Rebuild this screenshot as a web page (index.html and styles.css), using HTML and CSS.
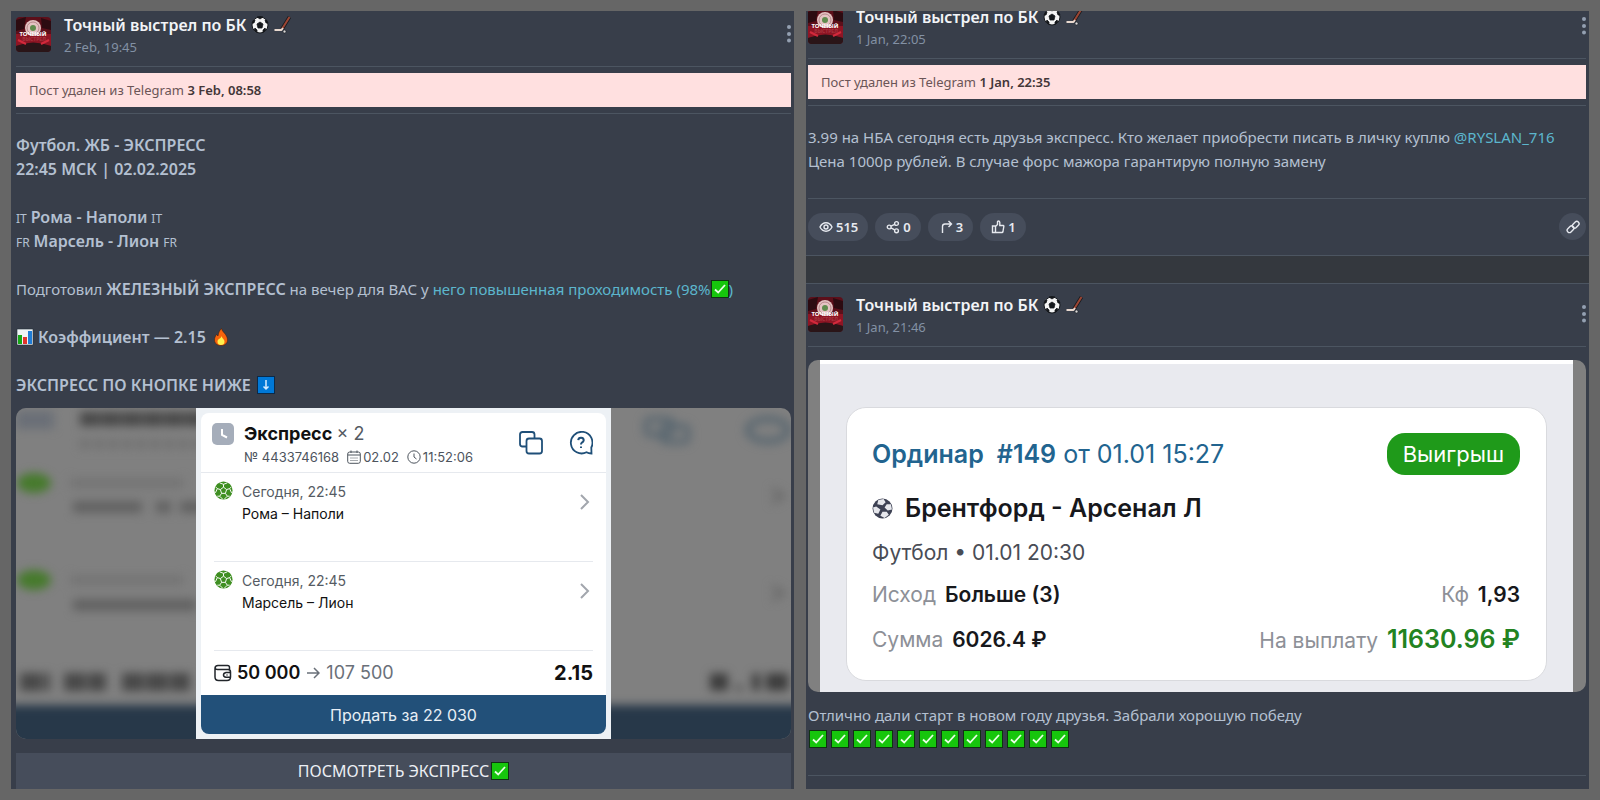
FILE: index.html
```html
<!DOCTYPE html>
<html lang="ru">
<head>
    <meta charset="UTF-8">
    <meta name="viewport" content="width=device-width, initial-scale=1.0">
    <title>Точный выстрел по БК</title>
    <link rel="stylesheet" href="styles.css">
</head>
<body>
    <!-- icons -->
    <svg class="sprite" aria-hidden="true">
        <symbol id="avatar" viewBox="0 0 35 35">
            <rect width="35" height="35" fill="#5c0f1a"/>
            <path d="M0 3L10 0 8 12 0 14zM25 1L35 4V13L26 11z" fill="#2c0b11"/>
            <path d="M0 17H35V29Q17 24 0 29z" fill="#8e1524"/>
            <path d="M0 29Q17 22 35 29V35H0z" fill="#2a1518"/>
            <path d="M2 23L10 27M33 23L25 27" stroke="#d22a3c" stroke-width="2"/>
            <circle cx="17" cy="11" r="8" fill="#e4c3c3"/>
            <circle cx="17" cy="11" r="6" fill="none" stroke="#b8878b" stroke-width="1"/>
            <circle cx="17" cy="11" r="3" fill="#5f8b4d"/>
            <text x="17" y="19" text-anchor="middle" font-family="Noto Sans, sans-serif" font-size="6" font-weight="700" fill="#ffffff">ТОЧНЫЙ</text>
            <text x="18" y="24" text-anchor="middle" font-family="Noto Sans, sans-serif" font-size="5" font-weight="700" fill="#a8343f">ВЫСТРЕЛ</text>
        </symbol>
        <symbol id="ball" viewBox="0 0 18 18">
            <circle cx="9" cy="9" r="8" fill="#f4f4f4" stroke="#15181c" stroke-width="1"/>
            <path d="M9 6L12 8 11 12H7L6 8zM6 1L9 3 12 1 9 .5zM1 7L3 7 4 4 2.500 4zM17 7L15 7 14 4 15.500 4zM3 14L4 12 6 14 6 16.500zM15 14L14 12 12 14 12 16.500z" fill="#15181c" stroke="#15181c" stroke-width=".8"/>
        </symbol>
        <symbol id="stick" viewBox="0 0 18 18">
            <path d="M16.500 1L9 13" stroke="#15181c" stroke-width="3.500" fill="none"/>
            <path d="M16.500 1L9 13" stroke="#9c4634" stroke-width="2" fill="none"/>
            <path d="M10 12L8.500 14H1.500" stroke="#e9d9cf" stroke-width="2" fill="none" stroke-linejoin="round"/>
            <circle cx="11.500" cy="15.500" r="1.500" fill="#d9d9d9" stroke="#15181c" stroke-width=".6"/>
        </symbol>
        <symbol id="check" viewBox="0 0 18 18">
            <rect x=".5" y=".5" width="17" height="17" fill="#16c60c" stroke="#0f3312"/>
            <path d="M4 9.500L7.200 12.500 14 5" fill="none" stroke="#e9ffe6" stroke-width="1.800"/>
        </symbol>
        <symbol id="down" viewBox="0 0 18 18">
            <rect x=".5" y=".5" width="17" height="17" fill="#0078d7" stroke="#0b2a49"/>
            <path d="M9 4V13M6.500 10.500L9 13 11.500 10.500" fill="none" stroke="#d7ecff" stroke-width="1.500"/>
        </symbol>
        <symbol id="chart" viewBox="0 0 18 18">
            <rect x="1" y="1" width="16" height="16" fill="#eef3f6" stroke="#22303a" stroke-width=".6"/>
            <rect x="2" y="7" width="4" height="9" fill="#16a716"/>
            <rect x="7" y="9" width="4" height="7" fill="#e0342c"/>
            <rect x="12" y="3" width="4" height="13" fill="#1f7cd6"/>
        </symbol>
        <symbol id="fire" viewBox="0 0 18 18">
            <path d="M9.500 .5C10 4 15.500 6.500 15.500 12 15.500 15.500 12.500 17.500 9 17.500S2.500 15.500 2.500 12C2.500 9.500 3.500 8 4.500 6.500L6 8C6.500 5 7.500 2 9.500 .5z" fill="#f7630c" stroke="#3a1a0a" stroke-width=".5"/>
            <path d="M9.500 8C10 10.500 12.500 11 12.500 13.800 12.500 16 11 17 9 17S5.500 16 5.500 13.800C5.500 12.500 6 11.500 7 11 8 10.500 9.300 9.500 9.500 8z" fill="#fff04d"/>
        </symbol>
        <symbol id="dots" viewBox="0 0 4 18">
            <circle cx="2" cy="2" r="2"/><circle cx="2" cy="9" r="2"/><circle cx="2" cy="15.500" r="2"/>
        </symbol>
        <symbol id="eye" viewBox="0 0 14 14">
            <path d="M1 7C2.500 4 4.500 2.800 7 2.800S11.500 4 13 7C11.500 10 9.500 11.200 7 11.200S2.500 10 1 7z"/><circle cx="7" cy="7" r="2"/>
        </symbol>
        <symbol id="share" viewBox="0 0 14 14">
            <circle cx="3.200" cy="7" r="1.900"/><circle cx="10.500" cy="3.500" r="1.900"/><circle cx="10.500" cy="10.800" r="1.900"/><path d="M5 6.200L8.700 4.300M5 7.900L8.700 9.900"/>
        </symbol>
        <symbol id="forward" viewBox="0 0 14 14">
            <path d="M3.500 13V6.500Q3.500 4 6 4H12M9.500 1L12.500 4 9.500 7"/>
        </symbol>
        <symbol id="like" viewBox="0 0 14 14">
            <path d="M1.500 6H4.500V12.500H1.500zM4.500 6.500L6.500 4.500V2Q6.500 1 7.500 1T8.800 2.500V5.500H12.300Q13 5.500 12.800 6.500L12 11.500Q11.800 12.500 11 12.500H4.500"/>
        </symbol>
        <symbol id="link" viewBox="0 0 14 14">
            <rect x="6" y="2.500" width="7.500" height="4.500" rx="2.200" transform="rotate(-45 9.800 4.800)"/>
            <rect x=".8" y="7" width="7.500" height="4.500" rx="2.200" transform="rotate(-45 4.500 9.300)"/>
        </symbol>
        <symbol id="chevron" viewBox="0 0 10 16"><path d="M1 1L8 8 1 15"/></symbol>
        <symbol id="sport" viewBox="0 0 20 20">
            <circle cx="10" cy="10" r="9.500" fill="#3f8f22"/>
            <path d="M10 6.500L13.300 9 12 13H8L6.700 9zM10 6.500V3.500M13.300 9L16.500 8M12 13L14 16M8 13L6 16M6.700 9L3.500 8M6 2L10 3.500 14 2M18.500 6L16.500 8 18.500 12.500M16.500 16L14 16 11 19M9 19L6 16 3.500 16M1.500 12.500L3.500 8 1.500 6" fill="none" stroke="#ffffff" stroke-width="1"/>
        </symbol>
    </svg>

    <main class="board">
        <section class="panel panel-left">
            <article class="post">
                <header class="post-header">
                    <svg class="avatar"><use href="#avatar"/></svg>
                    <div class="post-info">
                        <h2>Точный выстрел по БК <svg class="emoji"><use href="#ball"/></svg> <svg class="emoji"><use href="#stick"/></svg></h2>
                        <time>2 Feb, 19:45</time>
                    </div>
                    <button class="menu" aria-label="Меню"><svg><use href="#dots"/></svg></button>
                </header>
                <div class="deleted"><p>Пост удален из Telegram <b>3 Feb, 08:58</b></p></div>
                <div class="post-text">
                    <p><b>Футбол. ЖБ - ЭКСПРЕСС<br>22:45 МСК | 02.02.2025</b></p>
                    <p><small>IT</small> <b>Рома - Наполи</b> <small>IT</small><br><small>FR</small> <b>Марсель - Лион</b> <small>FR</small></p>
                    <p>Подготовил <b>ЖЕЛЕЗНЫЙ ЭКСПРЕСС</b> на вечер для ВАС у <a href="#">него повышенная проходимость (98%<svg class="emoji"><use href="#check"/></svg>)</a></p>
                    <p><svg class="emoji"><use href="#chart"/></svg> <b>Коэффициент — 2.15</b> <svg class="emoji"><use href="#fire"/></svg></p>
                    <p><b>ЭКСПРЕСС ПО КНОПКЕ НИЖЕ</b> <svg class="emoji"><use href="#down"/></svg></p>
                </div>
                <div class="media">
                    <svg class="media-back" viewBox="0 0 775 331" preserveAspectRatio="none" aria-hidden="true">
                        <g class="blurred">
                            <rect x="0" y="3" width="38" height="18" fill="#6a6f77"/>
                            <path d="M64 11H190" stroke="#484848" stroke-width="14" stroke-dasharray="20 1"/>
                            <path d="M64 36H190" stroke="#707070" stroke-width="9" stroke-dasharray="10 4"/>
                            <ellipse cx="18" cy="75" rx="17" ry="10" fill="#467a2c"/>
                            <path d="M54 75H168" stroke="#747474" stroke-width="10"/>
                            <path d="M57 99H126M140 99H155M164 99H190" stroke="#626262" stroke-width="12"/>
                            <ellipse cx="18" cy="172" rx="17" ry="10" fill="#467a2c"/>
                            <path d="M54 172H168" stroke="#747474" stroke-width="10"/>
                            <path d="M57 197H180" stroke="#626262" stroke-width="12"/>
                            <path d="M4 274H34M48 274H90M106 274H174" stroke="#484848" stroke-width="18" stroke-dasharray="22 2"/>
                            <rect x="630" y="11" width="26" height="16" rx="4" fill="none" stroke="#56656f" stroke-width="5"/>
                            <rect x="646" y="18" width="26" height="16" rx="4" fill="none" stroke="#56656f" stroke-width="5"/>
                            <ellipse cx="752" cy="22" rx="20" ry="11" fill="none" stroke="#56656f" stroke-width="6"/>
                            <path d="M756 81L767 88 756 95M756 178L767 185 756 192" fill="none" stroke="#686868" stroke-width="4"/>
                            <path d="M694 274H712M736 274H744M750 274H772" stroke="#3c3c3c" stroke-width="17"/>
                            <path d="M720 280H726" stroke="#4c4c4c" stroke-width="6"/>
                            <rect x="-20" y="297" width="815" height="60" fill="#273849"/>
                        </g>
                    </svg>
                    <div class="slip">
                        <div class="slip-head">
                            <svg class="slip-clock" viewBox="0 0 22 22"><rect width="22" height="22" rx="5" fill="#a5adba"/><path d="M10 6V12L15 14.500" fill="none" stroke="#ffffff" stroke-width="2"/></svg>
                            <div class="slip-title">
                                <h3>Экспресс <span>× 2</span></h3>
                                <p>
                                    <span>№ 4433746168</span>
                                    <span><svg viewBox="0 0 14 14"><rect x=".7" y="2" width="12.600" height="11.300" rx="2"/><path d="M1 5H13M4 .5V3M10 .5V3"/><path d="M3.500 8H11M3.500 10.500H11" stroke-dasharray="1 1"/></svg>02.02</span>
                                    <span><svg viewBox="0 0 14 14"><circle cx="7" cy="7" r="6.200"/><path d="M7 3.500V7L9.500 9"/></svg>11:52:06</span>
                                </p>
                            </div>
                            <div class="slip-tools">
                                <svg viewBox="0 0 24 24"><path d="M7 15.500H3.500Q1 15.500 1 13V3.500Q1 1 3.500 1H13Q15.500 1 15.500 3.500V7"/><rect x="7.500" y="7.500" width="15.500" height="15" rx="2.500"/></svg>
                                <svg viewBox="0 0 24 24"><path d="M22.500 22.500L22.300 16.500A10.800 10.800 0 1 0 17.500 21.300Q19.500 22.500 22.500 22.500z"/><path d="M9.200 9.200Q9.500 6.500 12.200 6.700 14.800 6.900 14.700 9.300 14.500 10.800 13 11.500 12 12.200 12 13.500M12 15.500V17" stroke-width="2"/></svg>
                            </div>
                        </div>
                        <div class="slip-row">
                            <svg class="slip-sport"><use href="#sport"/></svg>
                            <p><span>Сегодня, 22:45</span><br>Рома – Наполи</p>
                            <svg class="slip-chevron"><use href="#chevron"/></svg>
                        </div>
                        <div class="slip-row">
                            <svg class="slip-sport"><use href="#sport"/></svg>
                            <p><span>Сегодня, 22:45</span><br>Марсель – Лион</p>
                            <svg class="slip-chevron"><use href="#chevron"/></svg>
                        </div>
                        <div class="slip-total">
                            <svg viewBox="0 0 18 18"><path d="M15.500 6V3.500Q15.500 1.500 13.500 1.500H4Q1 1.500 1 4.500V13Q1 16.500 4.500 16.500H13Q16.500 16.500 16.500 13V8Q16.500 5.500 14 5.500H3.500Q1 5.500 1 3.500M16.500 8.500H12Q9.500 9 9.500 11T12 13.300H16.500M12.500 11H13.500"/></svg>
                            <b>50 000</b> <svg class="slip-arrow" viewBox="0 0 14 14"><path d="M1 7H13M8 2L13 7 8 12"/></svg> <span>107 500</span>
                            <strong>2.15</strong>
                        </div>
                        <button class="slip-sell">Продать за 22 030</button>
                    </div>
                </div>
                <a class="post-link" href="#">ПОСМОТРЕТЬ ЭКСПРЕСС<svg class="emoji"><use href="#check"/></svg></a>
            </article>
        </section>

        <section class="panel panel-right">
            <article class="post">
                <header class="post-header">
                    <svg class="avatar"><use href="#avatar"/></svg>
                    <div class="post-info">
                        <h2>Точный выстрел по БК <svg class="emoji"><use href="#ball"/></svg> <svg class="emoji"><use href="#stick"/></svg></h2>
                        <time>1 Jan, 22:05</time>
                    </div>
                    <button class="menu" aria-label="Меню"><svg><use href="#dots"/></svg></button>
                </header>
                <div class="deleted"><p>Пост удален из Telegram <b>1 Jan, 22:35</b></p></div>
                <div class="post-text">
                    <p>3.99 на НБА сегодня есть друзья экспресс. Кто желает приобрести писать в личку куплю <a href="#">@RYSLAN_716</a><br>Цена 1000р рублей. В случае форс мажора гарантирую полную замену</p>
                </div>
                <footer class="post-footer">
                    <button class="pill"><svg><use href="#eye"/></svg>515</button>
                    <button class="pill"><svg><use href="#share"/></svg>0</button>
                    <button class="pill"><svg><use href="#forward"/></svg>3</button>
                    <button class="pill"><svg><use href="#like"/></svg>1</button>
                    <a class="permalink" href="#" aria-label="Ссылка"><svg><use href="#link"/></svg></a>
                </footer>
            </article>
            <div class="divider"></div>
            <article class="post">
                <header class="post-header">
                    <svg class="avatar"><use href="#avatar"/></svg>
                    <div class="post-info">
                        <h2>Точный выстрел по БК <svg class="emoji"><use href="#ball"/></svg> <svg class="emoji"><use href="#stick"/></svg></h2>
                        <time>1 Jan, 21:46</time>
                    </div>
                    <button class="menu" aria-label="Меню"><svg><use href="#dots"/></svg></button>
                </header>
                <div class="media media-wide">
                    <div class="bet">
                        <div class="bet-card">
                            <div class="bet-head">
                                <p><b>Ординар</b> <b>#149</b> от 01.01 15:27</p>
                                <span class="bet-status">Выигрыш</span>
                            </div>
                            <h3>
                                <svg viewBox="0 0 20 20"><circle cx="10" cy="10" r="9.500" fill="#3e4254"/><path d="M6 2L11 1 13 4 10 7 5 6zM14 6L18 6 19 11 15 12 12 9zM1 9L4 8 8 11 6 15 2 14zM10 13L14 13 16 16 12 19 8 17z" fill="#e6e7ec"/></svg>
                                Брентфорд - Арсенал Л
                            </h3>
                            <p class="bet-when">Футбол • 01.01 20:30</p>
                            <div class="bet-row"><p>Исход <b>Больше (3)</b></p><p>Кф <b>1,93</b></p></div>
                            <div class="bet-row"><p>Сумма <b>6026.4 ₽</b></p><p>На выплату <strong>11630.96 ₽</strong></p></div>
                        </div>
                    </div>
                </div>
                <div class="post-text caption">
                    <p>Отлично дали старт в новом году друзья. Забрали хорошую победу</p>
                    <p class="checks"><svg><use href="#check"/></svg><svg><use href="#check"/></svg><svg><use href="#check"/></svg><svg><use href="#check"/></svg><svg><use href="#check"/></svg><svg><use href="#check"/></svg><svg><use href="#check"/></svg><svg><use href="#check"/></svg><svg><use href="#check"/></svg><svg><use href="#check"/></svg><svg><use href="#check"/></svg><svg><use href="#check"/></svg></p>
                </div>
            </article>
        </section>
    </main>
</body>
</html>
```
FILE: styles.css
```css
:root { --panel: #383e4a; --line: #4c5561; --text: #b4c0d1; --link: #5cb6cd; --chip: #464d5b; }
* { box-sizing: border-box; }
body { margin: 0; padding: 11px; background: #666666; color: var(--text); font-family: "Noto Sans", sans-serif; font-size: 15px; line-height: 24px; }
h2, h3, p { margin: 0; }
b { font-weight: 600; }
button { border: none; padding: 0; font: inherit; cursor: pointer; }
a { color: var(--link); text-decoration: none; }
.sprite { position: absolute; width: 0; height: 0; }
.emoji { width: 18px; height: 18px; vertical-align: -3px; }

.board { display: grid; grid-template-columns: 1fr 1fr; gap: 12px; }
.panel { background: var(--panel); overflow: hidden; min-width: 0; }
/* both feeds are scrolled a little past the top */
.panel-left .post { padding: 10px 3px 0 5px; margin-top: -7px; }
.panel-right .post { padding: 10px 3px 0 2px; }
.panel-right .post:first-child { margin-top: -15px; }

.post-header { display: flex; align-items: flex-start; padding-bottom: 8px; border-bottom: 1px solid var(--line); }
.avatar { width: 35px; height: 35px; margin-top: 3px; border-radius: 4px; }
.post-info { flex: 1; margin-left: 13px; line-height: 22px; }
.post-info h2 { font-size: 16px; font-weight: 600; color: #f2f4f7; }
.post-info time { display: block; font-size: 13px; color: #8391a4; }
.menu { height: 18px; margin-top: 11px; background: none; line-height: 0; }
.menu svg { width: 4px; height: 18px; fill: #94a0b1; }

.deleted { padding: 6px 0; border-bottom: 1px solid var(--line); }
.deleted p { padding: 0 13px; line-height: 34px; font-size: 13px; background: #ffe0e0; color: #6b5557; }
.deleted b { color: #433638; }

.post-text { padding: 19px 0 25px; }
.post-text small { font-size: 12px; line-height: 0; }
.panel-left .post-text { padding: 19px 0 11px; }
.panel-left .post-text p + p { margin-top: 24px; }
.panel-left .post-text b { font-size: 16px; line-height: 0; }
.post-text .emoji { margin: 0 2px; }
.post-text .emoji:first-child { margin: 0; }

.media { position: relative; display: flex; justify-content: center; height: 331px; border-radius: 10px; overflow: hidden; background: #808080; }
.media-back { position: absolute; top: 0; left: 0; width: 100%; height: 100%; }
.blurred { filter: blur(5px); }

.slip { position: relative; width: 415px; padding: 5px; background: #edf1f5; font-family: Inter, sans-serif; color: #111111; }
.slip-head { display: flex; height: 60px; padding: 10px 13px 0 11px; background: #ffffff; border-bottom: 1px solid #e6e9ee; border-radius: 8px 8px 0 0; }
.slip-clock { width: 22px; height: 22px; }
.slip-title { flex: 1; margin-left: 10px; }
.slip-title h3 { font-size: 18px; line-height: 22px; font-weight: 700; }
.slip-title h3 span { font-weight: 400; color: #555b63; }
.slip-title p { display: flex; gap: 8px; font-size: 13px; line-height: 24px; color: #4d545d; }
.slip-title p span { display: flex; align-items: center; gap: 2px; }
.slip-title svg { width: 14px; height: 14px; fill: none; stroke: #4d545d; }
.slip-tools { display: flex; gap: 26px; margin-top: 8px; }
.slip-tools svg { width: 24px; height: 24px; fill: none; stroke: #1f4f78; stroke-width: 1.8; }
.slip-row { display: flex; height: 89px; padding-top: 8px; margin: 0 13px; border-bottom: 1px solid #e6e9ee; }
.slip-row, .slip-total { background: #ffffff; box-shadow: -13px 0 #ffffff, 13px 0 #ffffff; }
.slip-sport { width: 19px; height: 19px; }
.slip-row p { flex: 1; margin-left: 9px; font-size: 14px; line-height: 22px; }
.slip-row span { color: #555b63; }
.slip-chevron { width: 10px; height: 16px; margin: 13px 3px 0 0; fill: none; stroke: #a2a6ad; stroke-width: 2; }
.slip-total { display: flex; align-items: center; height: 44px; margin: 0 13px; font-size: 18px; color: #6a7079; }
.slip-total svg { width: 18px; height: 18px; margin-right: 5px; fill: none; stroke: #22262b; stroke-width: 1.5; }
.slip-total .slip-arrow { width: 14px; height: 14px; margin: 0 6px; stroke: #6a7079; }
.slip-total b { color: #111111; }
.slip-total strong { margin-left: auto; color: #111111; font-size: 20px; }
.slip-sell { display: block; width: 100%; height: 39px; background: #225079; border-radius: 0 0 8px 8px; color: #e8eff6; font-size: 16px; }

.post-link { display: flex; justify-content: center; align-items: center; height: 36px; margin-top: 14px; background: var(--chip); color: #eceff4; font-size: 16px; }
.post-link .emoji { margin-left: 2px; }

.post-footer { display: flex; gap: 7px; padding: 14px 0; border-top: 1px solid var(--line); }
.pill { display: flex; align-items: center; gap: 3px; height: 28px; padding: 0 10px 0 11px; background: var(--chip); border-radius: 14px; color: #e6e9ef; font-size: 13px; font-weight: 600; }
.pill svg, .permalink svg { width: 14px; height: 14px; fill: none; stroke: #e6e9ef; stroke-width: 1.4; }
.permalink { display: flex; align-items: center; justify-content: center; width: 27px; height: 27px; margin-left: auto; background: var(--chip); border-radius: 50%; }
.divider { height: 29px; background: #34383e; border-top: 1px solid var(--line); border-bottom: 1px solid var(--line); }

.media-wide { height: 332px; margin-top: 13px; padding: 0 13px 0 12px; }
.bet { flex: 1; padding: 43px 26px 0; background: #e9eaef; border-top: 4px solid #ffffff; font-family: Inter, sans-serif; color: #17181c; }
.bet-card { height: 274px; padding: 25px 26px 0 25px; background: #ffffff; border: 1px solid #d9dade; border-radius: 20px; font-size: 21px; }
.bet-head { display: flex; justify-content: space-between; align-items: center; height: 42px; font-size: 25px; color: #22648f; }
.bet-head b:first-child { margin-right: 6px; }
.bet-status { padding: 0 16px; line-height: 42px; background: #1f9a1a; border-radius: 18px; color: #ffffff; font-size: 22px; }
.bet-card h3 { display: flex; align-items: center; gap: 12px; height: 66px; font-size: 25px; font-weight: 600; }
.bet-card h3 svg { width: 21px; height: 21px; }
.bet-when { color: #494c55; }
.bet-row { display: flex; justify-content: space-between; line-height: 45px; color: #8d9097; }
.bet-when + .bet-row { margin-top: 7px; }
.bet-row b, .bet-row strong { margin-left: 3px; color: #17181c; }
.bet-row strong { font-size: 25px; font-weight: 600; color: #238321; }

.caption { padding: 11px 0 24px; border-bottom: 1px solid var(--line); margin-bottom: 12px; }
.checks { display: flex; gap: 4px; padding: 3px 1px; }
.checks svg { width: 18px; height: 18px; }
```
